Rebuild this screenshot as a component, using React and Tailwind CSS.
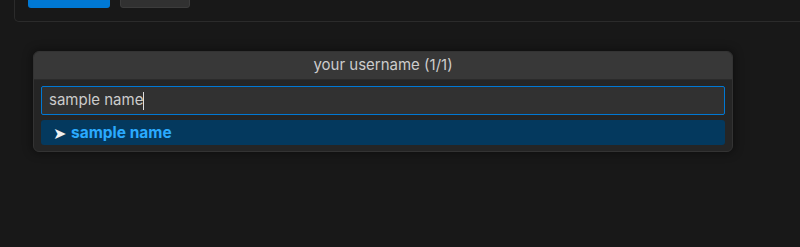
export default function App() {
  return (
    <div
      className="w-[800px] h-[247px] overflow-hidden bg-[#181818] text-[#cccccc]"
      style={{ fontFamily: 'Inter, "Noto Sans", sans-serif' }}
    >
      {/* settings panel, mostly scrolled off the top */}
      <div className="ml-[14px] mr-[-20px] mt-[-20px] pl-[13px] pb-[13px] border border-t-0 border-[#2b2b2b] rounded-b-[5px]">
        <div className="flex gap-[10px]">
          <button className="w-[82px] h-[28px] rounded-[3px] bg-[#0078d4]" />
          <button className="w-[70px] h-[28px] rounded-[3px] bg-[#313131] border border-[#3c3c3c]" />
        </div>
      </div>

      {/* quick input */}
      <div className="ml-[33px] mt-[29px] w-[700px] rounded-[6px] bg-[#252525] border border-[#333333] shadow-[0_0_8px_2px_rgba(0,0,0,0.35)] overflow-hidden">
        <div className="h-[28px] flex items-center justify-center bg-[#383838] border-b border-[#2b2b2b] text-[15px] text-[#cccccc]">
          your username (1/1)
        </div>
        <div className="px-[7px] pt-[6px] pb-[6px]">
          <div className="h-[29px] flex items-center px-[7px] bg-[#313131] border border-[#0078d4] rounded-[2px] text-[15px] text-[#cccccc]">
            sample name
            <span className="inline-block w-[1px] h-[18px] bg-[#dddddd]" />
          </div>
          <div className="mt-[5px] h-[25px] flex items-center pl-[12px] rounded-[3px] bg-[#04395e] text-[15.5px]">
            <span className="text-[#f0f0f0] text-[16px] leading-none mr-[5px]">➤</span>
            <span className="font-bold text-[#2aaaff]">sample name</span>
          </div>
        </div>
      </div>
    </div>
  );
}
